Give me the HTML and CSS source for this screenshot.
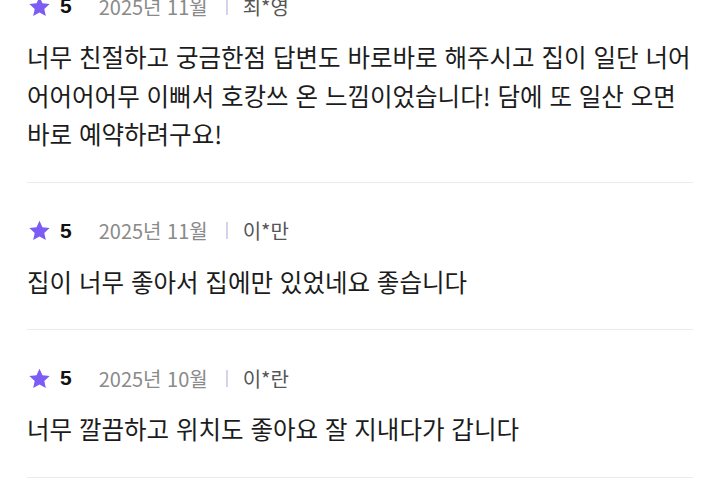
FILE: index.html
```html
<!DOCTYPE html>
<html lang="ko">
<head>
<meta charset="utf-8">
<link rel="stylesheet" href="styles.css">
</head>
<body>
<div class="list">
  <div class="review">
    <div class="meta">
      <svg class="star" viewBox="0 0 24 24"><path d="M12 1.8l3.1 6.9 7.5.8-5.6 5.1 1.6 7.4L12 18.2 5.4 22l1.6-7.4L1.4 9.5l7.5-.8z"/></svg>
      <span class="score">5</span>
      <span class="date">2025년 11월</span>
      <span class="sep"></span>
      <span class="name">최*영</span>
    </div>
    <p class="text">너무 친절하고 궁금한점 답변도 바로바로 해주시고 집이 일단 너어<br>어어어어무 이뻐서 호캉쓰 온 느낌이었습니다! 담에 또 일산 오면<br>바로 예약하려구요!</p>
  </div>
  <div class="review">
    <div class="meta">
      <svg class="star" viewBox="0 0 24 24"><path d="M12 1.8l3.1 6.9 7.5.8-5.6 5.1 1.6 7.4L12 18.2 5.4 22l1.6-7.4L1.4 9.5l7.5-.8z"/></svg>
      <span class="score">5</span>
      <span class="date">2025년 11월</span>
      <span class="sep"></span>
      <span class="name">이*만</span>
    </div>
    <p class="text">집이 너무 좋아서 집에만 있었네요 좋습니다</p>
  </div>
  <div class="review">
    <div class="meta">
      <svg class="star" viewBox="0 0 24 24"><path d="M12 1.8l3.1 6.9 7.5.8-5.6 5.1 1.6 7.4L12 18.2 5.4 22l1.6-7.4L1.4 9.5l7.5-.8z"/></svg>
      <span class="score">5</span>
      <span class="date">2025년 10월</span>
      <span class="sep"></span>
      <span class="name">이*란</span>
    </div>
    <p class="text">너무 깔끔하고 위치도 좋아요 잘 지내다가 갑니다</p>
  </div>
</div>
</body>
</html>
```
FILE: styles.css
```css
html, body {
  margin: 0;
  padding: 0;
  background: #ffffff;
  overflow: hidden;
}
body {
  width: 720px;
  height: 480px;
  font-family: "Noto Sans CJK KR", "Noto Sans", sans-serif;
  color: #1a1a1a;
}
.list {
  margin-top: -42px;
  padding: 0 27px;
}
.review {
  padding: 34px 0 28px;
  border-bottom: 1px solid #ececec;
}
.meta {
  display: flex;
  align-items: center;
  height: 28px;
}
.star {
  width: 23px;
  height: 23px;
  fill: #7b5cf4;
  margin-left: 1px;
}
.score {
  font-family: "Liberation Sans", "Noto Sans CJK KR", sans-serif;
  font-weight: 700;
  font-size: 21px;
  color: #111;
  margin-left: 9px;
}
.date {
  font-size: 20px;
  color: #8a8a8a;
  margin-left: 27px;
}
.sep {
  width: 2px;
  height: 17px;
  background: #d6d2ee;
  margin: 0 15px 0 18px;
}
.name {
  font-size: 20px;
  color: #555;
}
.text {
  margin: 18px 0 0;
  font-size: 24.5px;
  line-height: 38.5px;
  color: #1c1c1c;
}
```
